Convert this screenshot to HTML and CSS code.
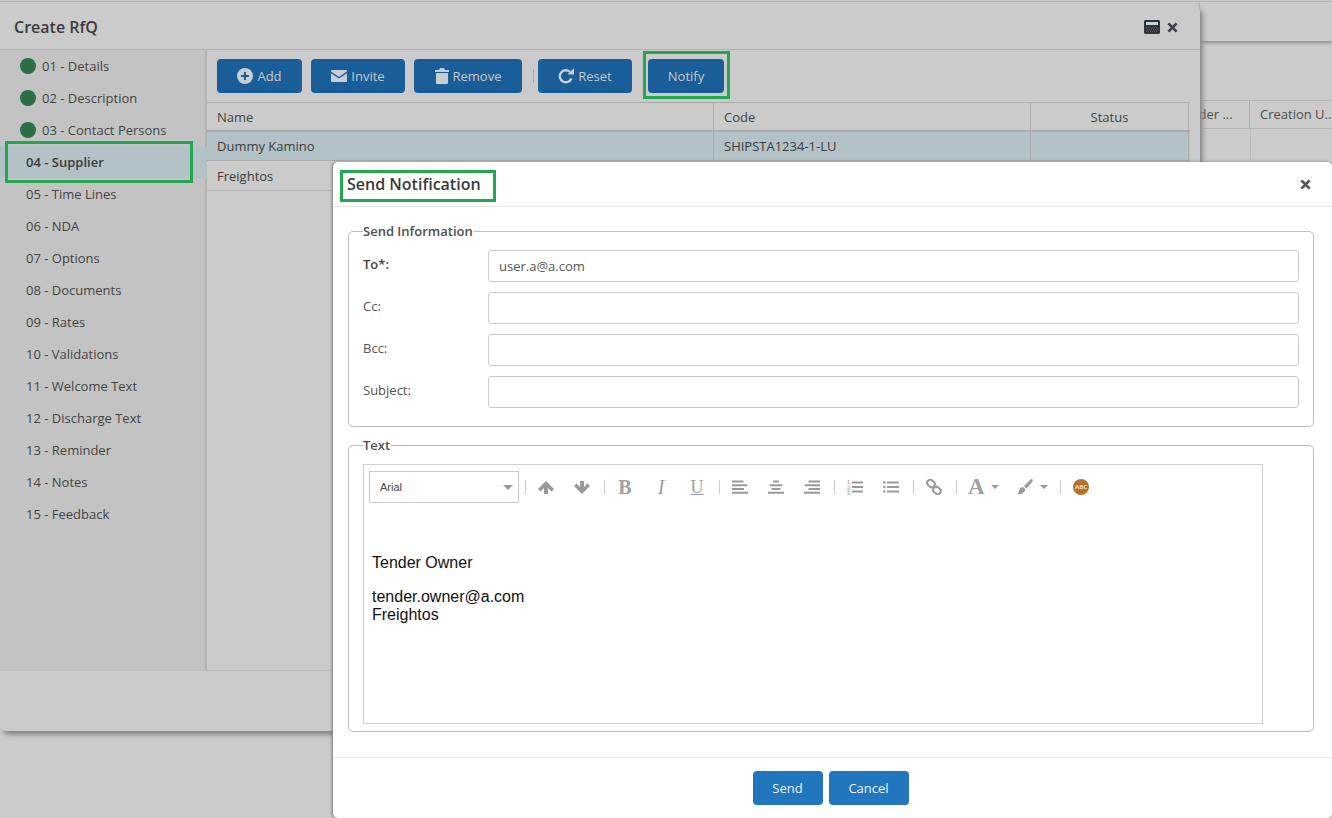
FILE: index.html
```html
<!DOCTYPE html>
<html lang="en">
<head>
<meta charset="utf-8">
<title>Create RfQ</title>
<link rel="stylesheet" href="styles.css">
</head>
<body>
<div class="desktop">
  <div class="back-window">
    <div class="back-head"></div>
    <div class="back-table">
      <div class="back-cell back-a">Tender ...</div>
      <div class="back-cell back-b">Creation U..</div>
    </div>
    <div class="back-rule"></div>
  </div>

  <section class="rfq">
    <header class="rfq-head">
      <h1>Create RfQ</h1>
      <div class="rfq-tools">
        <svg class="i-win" viewBox="0 0 16 14"><path fill="#333" d="M1.500 0h13A1.500 1.500 0 0 1 16 1.500v11a1.500 1.500 0 0 1-1.500 1.500h-13A1.500 1.500 0 0 1 0 12.500v-11A1.500 1.500 0 0 1 1.500 0z"/><rect x="2" y="2" width="12" height="3" fill="#c4d4da"/><path stroke="#5a5a5a" stroke-width="1" stroke-dasharray="1 1" d="M2 7.500h12M3 9.500h11M2 11.500h12"/></svg>
        <svg class="i-x" viewBox="0 0 12 12"><path d="M1.500 1.500l9 9M10.500 1.500l-9 9" stroke="#45404a" stroke-width="3" fill="none"/></svg>
      </div>
    </header>
    <div class="rfq-body">
      <nav class="steps">
        <div class="step done"><i></i>01 - Details</div>
        <div class="step done"><i></i>02 - Description</div>
        <div class="step done"><i></i>03 - Contact Persons</div>
        <div class="step active">04 - Supplier</div>
        <div class="step">05 - Time Lines</div>
        <div class="step">06 - NDA</div>
        <div class="step">07 - Options</div>
        <div class="step">08 - Documents</div>
        <div class="step">09 - Rates</div>
        <div class="step">10 - Validations</div>
        <div class="step">11 - Welcome Text</div>
        <div class="step">12 - Discharge Text</div>
        <div class="step">13 - Reminder</div>
        <div class="step">14 - Notes</div>
        <div class="step">15 - Feedback</div>
      </nav>
      <div class="main">
        <div class="toolbar">
          <button class="btn w85"><svg class="ico" viewBox="0 0 16 16"><path fill="#c8ced3" fill-rule="evenodd" d="M8 0a8 8 0 1 1 0 16A8 8 0 0 1 8 0zM7 4v3H4v2h3v3h2V9h3V7H9V4z"/></svg>Add</button>
          <button class="btn w94"><svg class="ico mail" viewBox="0 0 16 12"><path fill="#c8ced3" d="M1 0h14a1 1 0 0 1 1 1v.5L8 7 0 1.500V1a1 1 0 0 1 1-1zM0 3.200l8 5.400 8-5.400V11a1 1 0 0 1-1 1H1a1 1 0 0 1-1-1z"/></svg>Invite</button>
          <button class="btn w108"><svg class="ico trash" viewBox="0 0 14 16"><path fill="#c8ced3" d="M5 0h4l1 2h4v2H0V2h4zM1 5h12v10a1 1 0 0 1-1 1H2a1 1 0 0 1-1-1z"/></svg>Remove</button>
          <span class="sep"></span>
          <button class="btn w94"><svg class="ico redo" viewBox="0 0 16 16"><path fill="none" stroke="#c8ced3" stroke-width="2.400" d="M13.400 10.500A6 6 0 1 1 12 4"/><path fill="#c8ced3" d="M9.500 6.500L16 6.500V0z"/></svg>Reset</button>
          <button class="btn w76 notify">Notify</button>
        </div>
        <div class="grid">
          <div class="row head">
            <div class="cell c1">Name</div><div class="cell c2">Code</div><div class="cell c3">Status</div>
          </div>
          <div class="row sel">
            <div class="cell c1">Dummy Kamino</div><div class="cell c2">SHIPSTA1234-1-LU</div><div class="cell c3"></div>
          </div>
          <div class="row plain">
            <div class="cell c1">Freightos</div>
          </div>
        </div>
      </div>
    </div>
    <div class="rfq-foot"></div>
  </section>

  <section class="modal">
    <header class="modal-head">
      <h2>Send Notification</h2>
      <svg class="i-x2" viewBox="0 0 12 12"><path d="M1.500 1.500l9 9M10.500 1.500l-9 9" stroke="#555" stroke-width="3" fill="none"/></svg>
    </header>
    <div class="modal-body">
      <fieldset class="box info">
        <legend>Send Information</legend>
        <div class="field"><label class="req">To*:</label><div class="input">user.a@a.com</div></div>
        <div class="field"><label>Cc:</label><div class="input"></div></div>
        <div class="field"><label>Bcc:</label><div class="input"></div></div>
        <div class="field"><label>Subject:</label><div class="input"></div></div>
      </fieldset>
      <fieldset class="box text">
        <legend>Text</legend>
        <div class="editor">
          <div class="ed-bar">
            <div class="font-select">Arial<b class="caret"></b></div>
            <span class="ed-sep first"></span>
            <span class="tb"><svg class="arrow" viewBox="0 0 16 13"><path fill="#999" d="M8 0l8 8-2.500 2.500L10 7v6H6V7l-3.500 3.500L0 8z"/></svg></span>
            <span class="tb"><svg class="arrow" viewBox="0 0 16 13"><path fill="#999" d="M8 13L0 5l2.500-2.500L6 6V0h4v6l3.500-3.500L16 5z"/></svg></span>
            <span class="ed-sep"></span>
            <span class="tb gl bold">B</span>
            <span class="tb gl ital">I</span>
            <span class="tb gl under">U</span>
            <span class="ed-sep"></span>
            <span class="tb"><svg class="lines" viewBox="0 0 16 14"><path stroke="#999" stroke-width="2" d="M0 1.500h11.500M0 5.300h15M0 9h12M0 12.800h16"/></svg></span>
            <span class="tb"><svg class="lines" viewBox="0 0 16 14"><path stroke="#999" stroke-width="2" d="M5 1.500h6M1.500 5.300h13M3.500 9h9M0 12.800h16"/></svg></span>
            <span class="tb"><svg class="lines" viewBox="0 0 16 14"><path stroke="#999" stroke-width="2" d="M4.500 1.500H16M1 5.300h15M4.500 9H16M0 12.800h16"/></svg></span>
            <span class="ed-sep"></span>
            <span class="tb"><svg class="lines" viewBox="0 0 16 16"><path stroke="#999" stroke-width="2" d="M5 3.500h11M5 8h11M5 12.500h11"/><text x="0" y="5" class="mini">1</text><text x="0" y="10.500" class="mini">2</text><text x="0" y="16" class="mini">3</text></svg></span>
            <span class="tb"><svg class="lines" viewBox="0 0 16 14"><path stroke="#999" stroke-width="2" d="M4 2.500h12M4 7h12M4 11.500h12"/><circle cx="1.300" cy="2.500" r="1.300" fill="#999"/><circle cx="1.300" cy="7" r="1.300" fill="#999"/><circle cx="1.300" cy="11.500" r="1.300" fill="#999"/></svg></span>
            <span class="ed-sep"></span>
            <span class="tb"><svg class="lines" viewBox="0 0 16 16"><g fill="none" stroke="#999" stroke-width="2"><rect x="1" y="1.500" width="8" height="6" rx="3" transform="rotate(40 5 4.500)"/><rect x="7" y="8.500" width="8" height="6" rx="3" transform="rotate(40 11 11.500)"/></g></svg></span>
            <span class="ed-sep"></span>
            <span class="tb-drop a-drop"><span class="gl bigA">A</span><b class="caret small"></b></span>
            <span class="tb-drop b-drop"><svg class="lines" viewBox="0 0 16 16"><path fill="#999" d="M15 0c1 1 1 2 0 3L9.500 9.500 7 7 13 1c.7-.7 1.300-1 2-1zM6 8l2.500 2.500C8 13.500 4 16 0 15c2-1 1.500-2.500 2.500-4.500C3.300 9 4.500 8.300 6 8z"/></svg><b class="caret small"></b></span>
            <span class="ed-sep"></span>
            <span class="tb"><span class="abc">ABC</span></span>
          </div>
          <div class="ed-text">
            <p>Tender Owner</p>
            <p>tender.owner@a.com<br>Freightos</p>
          </div>
        </div>
      </fieldset>
    </div>
    <footer class="modal-foot">
      <button class="btn2 send">Send</button>
      <button class="btn2 cancel">Cancel</button>
    </footer>
  </section>

  <div class="mark m-step"></div>
  <div class="mark m-title"></div>
  <div class="mark m-notify"></div>
</div>
</body>
</html>
```

FILE: styles.css
```css
* { box-sizing: border-box; }
html, body { margin: 0; padding: 0; height: 100%; overflow: hidden; }
body { font-family: "Open Sans", "Liberation Sans", sans-serif; font-size: 13px; color: #3c3c3c; background: #cbcbcb; }
.desktop { position: relative; width: 1332px; height: 818px; overflow: hidden; background: #cbcbcb; border-top: 1px solid #cbcbcb; }
.desktop::before { content: ""; position: absolute; left: 0; right: 0; top: 0; height: 1px; background: #b0b0b0; z-index: 3; }
h1, h2 { margin: 0; font-weight: 600; }
button { font-family: inherit; cursor: default; }

/* background window */
.back-window { position: absolute; left: 1100px; top: 0; width: 232px; height: 300px; }
.back-head { height: 40px; margin-left: 100px; background: #cbcbcb; box-shadow: 0 2px 3px #8f8f8f; }
.back-table { position: absolute; top: 99px; left: 65px; right: 0; height: 29px; display: flex; border-bottom: 1px solid #b4b4b4; border-top: 1px solid #b4b4b4; color: #4d4d4d; font-size: 13px; line-height: 27px; }
.back-cell { white-space: nowrap; }
.back-a { width: 85px; flex: none; padding-left: 11px; border-right: 1px solid #adadad; }
.back-b { flex: 1; padding-left: 10px; }
.back-rule { position: absolute; left: 150px; top: 128px; width: 1px; height: 34px; background: #bdbdbd; }

/* RfQ window */
.rfq { position: absolute; left: 0; top: 4px; width: 1200px; height: 726px; background: #cbcbcb; border-radius: 6px; box-shadow: 3px 4px 4px #8a8a8a; display: flex; flex-direction: column; }
.rfq-head { height: 45px; flex: none; display: flex; align-items: center; justify-content: space-between; padding: 0 22px 0 14px; border-bottom: 1px solid #b1b1b1; }
.rfq-head h1 { font-size: 16px; color: #3b3b3b; }
.rfq-tools { display: flex; align-items: center; gap: 7px; }
.i-win { width: 16px; height: 14px; display: block; }
.i-x { width: 11px; height: 11px; display: block; }
.rfq-body { height: 621px; flex: none; display: flex; }
.steps { width: 207px; flex: none; background: #c3c3c3; border-right: 2px solid #b3b3b3; }
.step { height: 32px; display: flex; align-items: center; padding-left: 26px; color: #444; white-space: nowrap; }
.step.done { padding-left: 20px; }
.step i { width: 16px; height: 16px; border-radius: 50%; background: #2b6e48; margin-right: 6px; flex: none; }
.step.active { background: #b3c2c6; font-weight: 600; color: #3a3a3a; margin-right: -2px; }
.main { flex: 1; min-width: 0; display: flex; flex-direction: column; padding-right: 10px; border-bottom: 1px solid #bdbdbd; }
.toolbar { height: 52px; flex: none; display: flex; align-items: center; padding: 0 0 0 10px; gap: 9px; }
.btn { height: 34px; border: 0; border-radius: 4px; background: #195e98; color: #c4c9cd; font-size: 13px; display: inline-flex; align-items: center; justify-content: center; padding: 0; }
.w85 { width: 85px; }
.w94 { width: 94px; }
.w108 { width: 108px; }
.w76 { width: 76px; }
.notify { margin-left: 7px; }
.ico { width: 16px; height: 16px; margin-right: 4px; display: block; }
.mail { width: 16px; height: 12px; }
.trash { width: 14px; height: 16px; }
.sep { width: 1px; height: 14px; background: #a9a9a9; margin: 0 -5px 0 2px; }
.grid { display: flex; flex-direction: column; }
.row { display: flex; }
.row.head { height: 30px; line-height: 28px; border-top: 1px solid #adadad; border-bottom: 2px solid #ababab; color: #444; }
.row.sel { height: 29px; line-height: 28px; background: #b3c2c6; border-bottom: 1px solid #acacac; }
.row.plain { height: 30px; line-height: 30px; border-bottom: 1px solid #b8b8b8; }
.cell { padding-left: 10px; white-space: nowrap; overflow: hidden; }
.c1 { width: 507px; border-right: 1px solid #adadad; flex: none; }
.c2 { width: 317px; border-right: 1px solid #adadad; flex: none; }
.c3 { width: 158px; flex: none; text-align: center; padding-left: 0; border-right: 1px solid #adadad; }
.plain .c1 { border-right: 0; }

/* modal */
.modal { position: absolute; left: 333px; top: 161px; width: 999px; height: 656px; background: #fff; border-radius: 5px; box-shadow: -1px 0 3px #777; display: flex; flex-direction: column; }
.modal-head { height: 45px; flex: none; display: flex; align-items: center; justify-content: space-between; padding: 0 21px 0 14px; border-bottom: 1px solid #e5e5e5; }
.modal-head h2 { font-size: 16px; color: #3a3a3a; }
.i-x2 { width: 11px; height: 11px; display: block; }
.modal-body { flex: 1; padding: 15px 18px 0 15px; }
.box { margin: 0; border: 1px solid #bcbcbc; border-radius: 5px; padding: 0 14px; min-width: 0; }
.box legend { padding: 0 1px 0 0; font-size: 13px; font-weight: 600; color: #4f4f4f; line-height: 18px; }
.info { height: 205px; padding-top: 10px; margin-bottom: 9px; }
.field { display: flex; align-items: center; height: 32px; margin-bottom: 10px; }
.field label { width: 125px; flex: none; color: #555; margin-top: -4px; }
.field label.req { font-weight: 600; color: #444; }
.input { flex: 1; height: 32px; border: 1px solid #ccc; border-radius: 3px; padding: 0 10px; line-height: 30px; color: #555; }
.text { height: 296px; padding-top: 10px; padding-right: 50px; }
.editor { border: 1px solid #cfcfcf; height: 260px; width: 900px; }
.ed-bar { height: 44px; display: flex; align-items: center; padding: 0 0 0 5px; }
.font-select { position: relative; width: 150px; height: 32px; flex: none; border: 1px solid #ccc; font-family: "Liberation Sans", sans-serif; font-size: 11px; line-height: 30px; padding-left: 10px; color: #444; }
.caret { display: block; width: 0; height: 0; border: 5px solid transparent; border-top: 5px solid #999; border-bottom: 0; position: absolute; right: 5px; top: 13px; }
.caret.small { position: static; border-width: 4px; border-top-color: #999; border-bottom: 0; flex: none; }
.ed-sep { width: 1px; height: 14px; background: #ccc; margin: 0 2px 0 4px; flex: none; }
.ed-sep.first { margin-left: 6px; }
.tb { width: 36px; height: 16px; flex: none; display: flex; align-items: center; justify-content: center; }
.tb-drop { flex: none; height: 16px; display: flex; align-items: center; }
.a-drop { width: 50px; padding-left: 9px; gap: 6px; }
.b-drop { width: 47px; padding-left: 8px; gap: 7px; }
.arrow { width: 16px; height: 13px; display: block; }
.lines { width: 16px; height: 16px; display: block; }
.gl { font-family: "Liberation Serif", serif; font-size: 20px; line-height: 16px; color: #a0a0a0; text-align: center; font-weight: 700; }
.ital { font-style: italic; font-weight: 400; }
.under { text-decoration: underline; font-weight: 400; font-size: 18px; }
.bigA { font-size: 23px; }
.mini { font-family: "Liberation Sans", sans-serif; font-size: 6px; fill: #999; }
.abc { width: 16px; height: 16px; border-radius: 50%; background: #b5732f; color: #f0e2d0; font-size: 6px; font-weight: 700; line-height: 16px; text-align: center; display: block; }
.ed-text { padding: 45px 0 0 8px; font-family: "Liberation Sans", sans-serif; font-size: 16px; line-height: 18px; color: #111; }
.ed-text p { margin: 0 0 16px; }
.modal-foot { height: 61px; flex: none; border-top: 1px solid #eee; display: flex; justify-content: center; align-items: flex-start; padding: 13px 4px 0 0; gap: 6px; }
.btn2 { height: 34px; border: 0; border-radius: 4px; background: #2176bd; color: #eef3f7; font-size: 13px; }
.send { width: 70px; }
.cancel { width: 80px; }

/* highlights */
.mark { position: absolute; border: 3px solid #21a84f; pointer-events: none; }
.m-step { left: 5px; top: 140px; width: 188px; height: 42px; }
.m-title { left: 340px; top: 169px; width: 156px; height: 32px; }
.m-notify { left: 643px; top: 50px; width: 87px; height: 48px; }
```
